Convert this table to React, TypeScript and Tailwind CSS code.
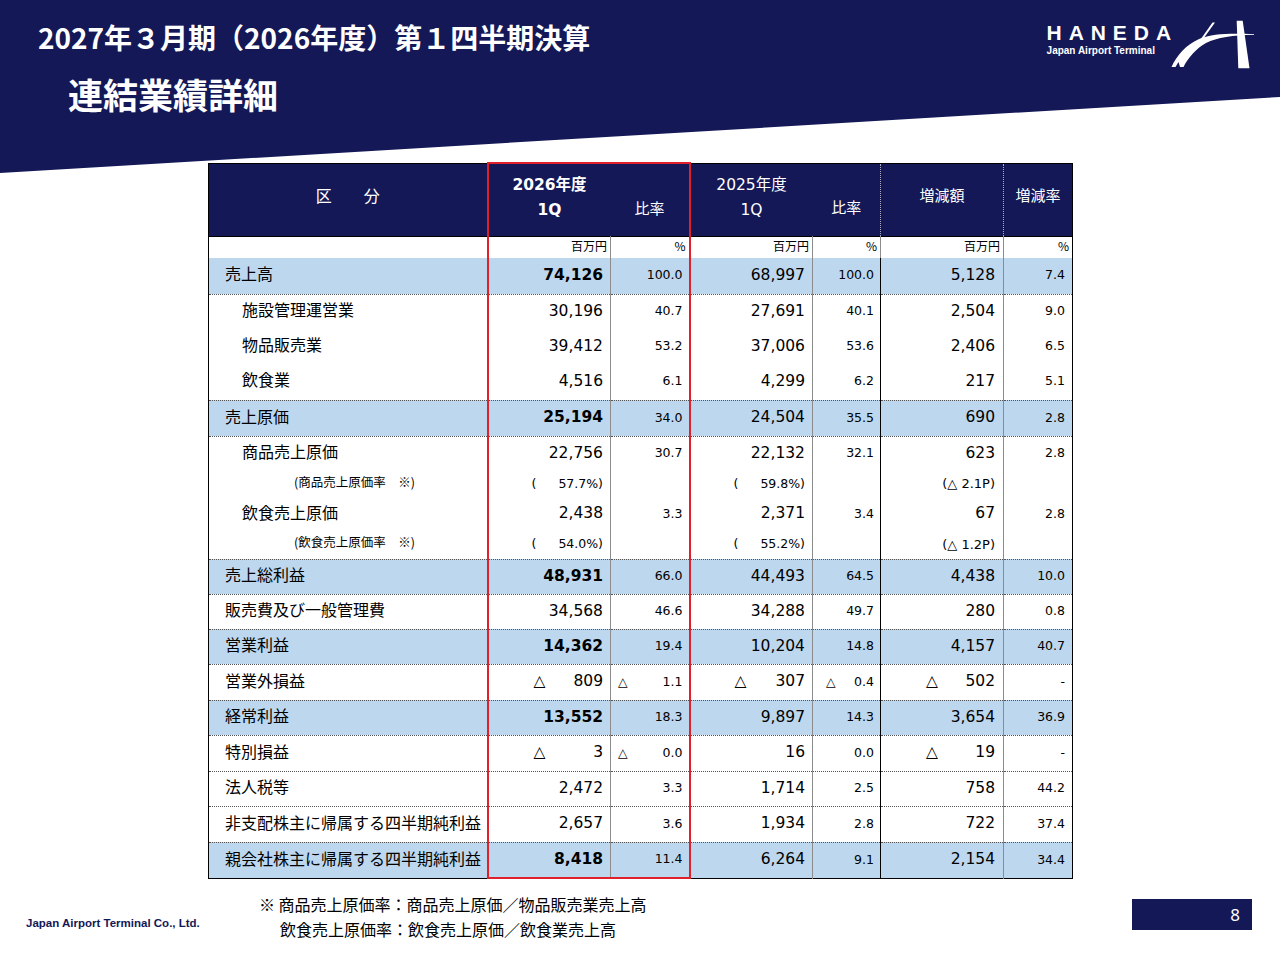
import React from "react";

type Row = {
  label: string;
  level: 0 | 1 | 2;
  blue?: boolean;
  h: string;
  line: boolean;
  v26: string;
  r26: string;
  v25: string;
  r25: string;
  dv: string;
  dr: string;
};

const ROWS: Row[] = [
  { label: "売上高", level: 0, blue: true, h: "h-[36px]", line: true, v26: "74,126", r26: "100.0", v25: "68,997", r25: "100.0", dv: "5,128", dr: "7.4" },
  { label: "施設管理運営業", level: 1, h: "h-[35px]", line: false, v26: "30,196", r26: "40.7", v25: "27,691", r25: "40.1", dv: "2,504", dr: "9.0" },
  { label: "物品販売業", level: 1, h: "h-[35px]", line: false, v26: "39,412", r26: "53.2", v25: "37,006", r25: "53.6", dv: "2,406", dr: "6.5" },
  { label: "飲食業", level: 1, h: "h-[36px]", line: true, v26: "4,516", r26: "6.1", v25: "4,299", r25: "6.2", dv: "217", dr: "5.1" },
  { label: "売上原価", level: 0, blue: true, h: "h-[36px]", line: true, v26: "25,194", r26: "34.0", v25: "24,504", r25: "35.5", dv: "690", dr: "2.8" },
  { label: "商品売上原価", level: 1, h: "h-[34px]", line: false, v26: "22,756", r26: "30.7", v25: "22,132", r25: "32.1", dv: "623", dr: "2.8" },
  { label: "(商品売上原価率　※)", level: 2, h: "h-[28px]", line: false, v26: "(|57.7%)", r26: "", v25: "(|59.8%)", r25: "", dv: "(△ 2.1P)", dr: "" },
  { label: "飲食売上原価", level: 1, h: "h-[32px]", line: false, v26: "2,438", r26: "3.3", v25: "2,371", r25: "3.4", dv: "67", dr: "2.8" },
  { label: "(飲食売上原価率　※)", level: 2, h: "h-[29px]", line: true, v26: "(|54.0%)", r26: "", v25: "(|55.2%)", r25: "", dv: "(△ 1.2P)", dr: "" },
  { label: "売上総利益", level: 0, blue: true, h: "h-[35px]", line: true, v26: "48,931", r26: "66.0", v25: "44,493", r25: "64.5", dv: "4,438", dr: "10.0" },
  { label: "販売費及び一般管理費", level: 0, h: "h-[35px]", line: true, v26: "34,568", r26: "46.6", v25: "34,288", r25: "49.7", dv: "280", dr: "0.8" },
  { label: "営業利益", level: 0, blue: true, h: "h-[35px]", line: true, v26: "14,362", r26: "19.4", v25: "10,204", r25: "14.8", dv: "4,157", dr: "40.7" },
  { label: "営業外損益", level: 0, h: "h-[36px]", line: true, v26: "△|809", r26: "△|1.1", v25: "△|307", r25: "△|0.4", dv: "△|502", dr: "-" },
  { label: "経常利益", level: 0, blue: true, h: "h-[35px]", line: true, v26: "13,552", r26: "18.3", v25: "9,897", r25: "14.3", dv: "3,654", dr: "36.9" },
  { label: "特別損益", level: 0, h: "h-[36px]", line: true, v26: "△|3", r26: "△|0.0", v25: "16", r25: "0.0", dv: "△|19", dr: "-" },
  { label: "法人税等", level: 0, h: "h-[35px]", line: true, v26: "2,472", r26: "3.3", v25: "1,714", r25: "2.5", dv: "758", dr: "44.2" },
  { label: "非支配株主に帰属する四半期純利益", level: 0, h: "h-[36px]", line: true, v26: "2,657", r26: "3.6", v25: "1,934", r25: "2.8", dv: "722", dr: "37.4" },
  { label: "親会社株主に帰属する四半期純利益", level: 0, blue: true, h: "h-[36px]", line: false, v26: "8,418", r26: "11.4", v25: "6,264", r25: "9.1", dv: "2,154", dr: "34.4" },
];

const NUM = "font-['DejaVu_Sans','Noto_Sans_CJK_JP',sans-serif]";

function Val({ text, pl }: { text: string; pl: string }) {
  const parts = text.includes("|") ? text.split("|") : ["", text];
  return (
    <div className={`flex justify-between ${parts[0] ? pl : ""}`}>
      <span>{parts[0]}</span>
      <span>{parts[1]}</span>
    </div>
  );
}

function Logo() {
  return (
    <div className="flex items-start pt-[20px] pr-[24px]">
      <div className="pt-[2px] text-white font-['Liberation_Sans',sans-serif]">
        <div className="text-[21px] leading-[21px] font-bold tracking-[0.33em]">HANEDA</div>
        <div className="text-[10px] leading-[12px] font-bold mt-[2px]">Japan Airport Terminal</div>
      </div>
      <svg width="86" height="52" viewBox="0 0 86 52" className="-ml-[8px] -mt-[2px]">
        <polygon points="66.7,2.7 72.7,2.7 79.5,50.3 68.3,50.3" fill="#fff" />
        <polygon points="42.5,4.5 45,4.5 33.5,20.5 30.5,21.5" fill="#fff" />
        <path
          d="M1.5,49 C7,37 16,27 29,21 C43,15 60,15.5 84,16 L84,16.8 C63,17.2 47,19.5 36,25 C26,30.5 18,40 13.5,49 L10,49 L8.5,44 L5.5,49 Z"
          fill="#fff"
        />
      </svg>
    </div>
  );
}

export default function App() {
  return (
    <div className="w-[1280px] h-[960px] bg-white overflow-hidden font-['Noto_Sans_CJK_JP',sans-serif] text-black">
      <div className="h-[173px] bg-[#141856] [clip-path:polygon(0_0,100%_0,100%_97px,0_173px)] flex justify-between">
        <div className="pl-[38px] pt-[19px] text-white font-bold">
          <h1 className="text-[28px] leading-[36px]">2027年３月期（2026年度）第１四半期決算</h1>
          <h2 className="text-[35px] leading-[44px] mt-[17px] ml-[30px]">連結業績詳細</h2>
        </div>
        <Logo />
      </div>

      <div className="relative -mt-[11px] ml-[208px] w-[864px]">
        <table className="table-fixed border-collapse w-[864px] border border-black">
          <colgroup>
            <col className="w-[279px]" />
            <col className="w-[123px]" />
            <col className="w-[79px]" />
            <col className="w-[123px]" />
            <col className="w-[68px]" />
            <col className="w-[123px]" />
            <col className="w-[69px]" />
          </colgroup>
          <thead>
            <tr className={`h-[73px] bg-[#141856] text-white border-b border-black ${NUM}`}>
              <th className="font-normal text-[16px] pb-[9px] font-['Noto_Sans_CJK_JP',sans-serif]">区　　分</th>
              <th className="font-bold text-[15.5px] leading-[25px] pb-[3px] border-t-2 border-l-2 border-[#e0202a]">
                <div>2026年度</div>
                <div>1Q</div>
              </th>
              <th className="font-normal text-[15px] pt-[16px] border-t-2 border-r-2 border-[#e0202a] font-['Noto_Sans_CJK_JP',sans-serif]">
                比率
              </th>
              <th className="font-normal text-[15.5px] leading-[25px] pb-[3px]">
                <div>2025年度</div>
                <div>1Q</div>
              </th>
              <th className="font-normal text-[15px] pt-[16px] font-['Noto_Sans_CJK_JP',sans-serif] border-r border-dotted border-[#b0b0c0]">
                比率
              </th>
              <th className="font-normal text-[15px] pb-[9px] font-['Noto_Sans_CJK_JP',sans-serif] border-r border-dotted border-[#b0b0c0]">
                増減額
              </th>
              <th className="font-normal text-[15px] pb-[9px] font-['Noto_Sans_CJK_JP',sans-serif]">増減率</th>
            </tr>
          </thead>
          <tbody>
            <tr className="h-[22px] text-[12px] leading-[14px]">
              <td />
              <td className="text-right pr-[3px] pb-[3px] align-middle border-l-2 border-r border-r-[#8c8c8c] border-l-[#e0202a]">百万円</td>
              <td className="text-right pr-[3px] pb-[3px] align-middle border-r-2 border-[#e0202a]">%</td>
              <td className="text-right pr-[3px] pb-[3px] align-middle border-r border-[#8c8c8c]">百万円</td>
              <td className="text-right pr-[3px] pb-[3px] align-middle border-r border-[#8c8c8c]">%</td>
              <td className="text-right pr-[3px] pb-[3px] align-middle border-r border-[#8c8c8c]">百万円</td>
              <td className="text-right pr-[3px] pb-[3px] align-middle">%</td>
            </tr>
            {ROWS.map((r, i) => {
              const last = i === ROWS.length - 1;
              return (
                <tr
                  key={r.label}
                  className={`${r.h} ${r.blue ? "bg-[#bdd7ee]" : ""} ${r.line ? "border-b border-dotted border-[#555]" : ""}`}
                >
                  <td
                    className={`align-middle whitespace-nowrap ${
                      r.level === 0
                        ? "pl-[16px] pb-[5px] text-[16px]"
                        : r.level === 1
                          ? "pl-[33px] pb-[5px] text-[16px]"
                          : "pl-[85px] pb-[3px] text-[12.5px]"
                    }`}
                  >
                    {r.label}
                  </td>
                  <td
                    className={`align-middle pr-[7px] ${NUM} ${r.level === 2 ? "text-[12.5px]" : "text-[15.5px]"} ${
                      r.blue ? "font-bold" : ""
                    } border-l-2 border-l-[#e0202a] border-r border-r-[#8c8c8c] ${last ? "border-b-2 border-b-[#e0202a]" : ""}`}
                  >
                    <Val text={r.v26} pl={r.level === 2 ? "pl-[43px]" : "pl-[45px]"} />
                  </td>
                  <td
                    className={`align-middle pr-[6px] text-[12.5px] ${NUM} border-r-2 border-r-[#e0202a] ${
                      last ? "border-b-2 border-b-[#e0202a]" : ""
                    }`}
                  >
                    <Val text={r.r26} pl="pl-[7px]" />
                  </td>
                  <td className={`align-middle pr-[7px] ${NUM} ${r.level === 2 ? "text-[12.5px]" : "text-[15.5px]"} border-r border-[#8c8c8c]`}>
                    <Val text={r.v25} pl={r.level === 2 ? "pl-[43px]" : "pl-[44px]"} />
                  </td>
                  <td className={`align-middle pr-[6px] text-[12.5px] ${NUM} border-r border-black`}>
                    <Val text={r.r25} pl="pl-[13px]" />
                  </td>
                  <td className={`align-middle pr-[8px] ${NUM} ${r.level === 2 ? "text-[13px]" : "text-[15.5px]"} border-r border-[#8c8c8c]`}>
                    <Val text={r.dv} pl="pl-[45px]" />
                  </td>
                  <td className={`align-middle pr-[7px] text-[12.5px] ${NUM}`}>
                    <Val text={r.dr} pl="pl-[8px]" />
                  </td>
                </tr>
              );
            })}
          </tbody>
        </table>
      </div>

      <div className="flex mt-[13px]">
        <div className="w-[259px] pl-[26px] pt-[24px] text-[11.5px] leading-[14px] font-bold text-[#141856] font-['Liberation_Sans',sans-serif]">
          Japan Airport Terminal Co., Ltd.
        </div>
        <div className="text-[16px] leading-[25px]">
          <div>※ 商品売上原価率：商品売上原価／物品販売業売上高</div>
          <div className="pl-[21px]">飲食売上原価率：飲食売上原価／飲食業売上高</div>
        </div>
        <div className="ml-auto mr-[28px] mt-[7px] w-[120px] h-[31px] bg-[#141856] text-white text-[17px] leading-[31px] text-right pr-[12px] font-['Noto_Sans',sans-serif]">
          8
        </div>
      </div>
    </div>
  );
}
